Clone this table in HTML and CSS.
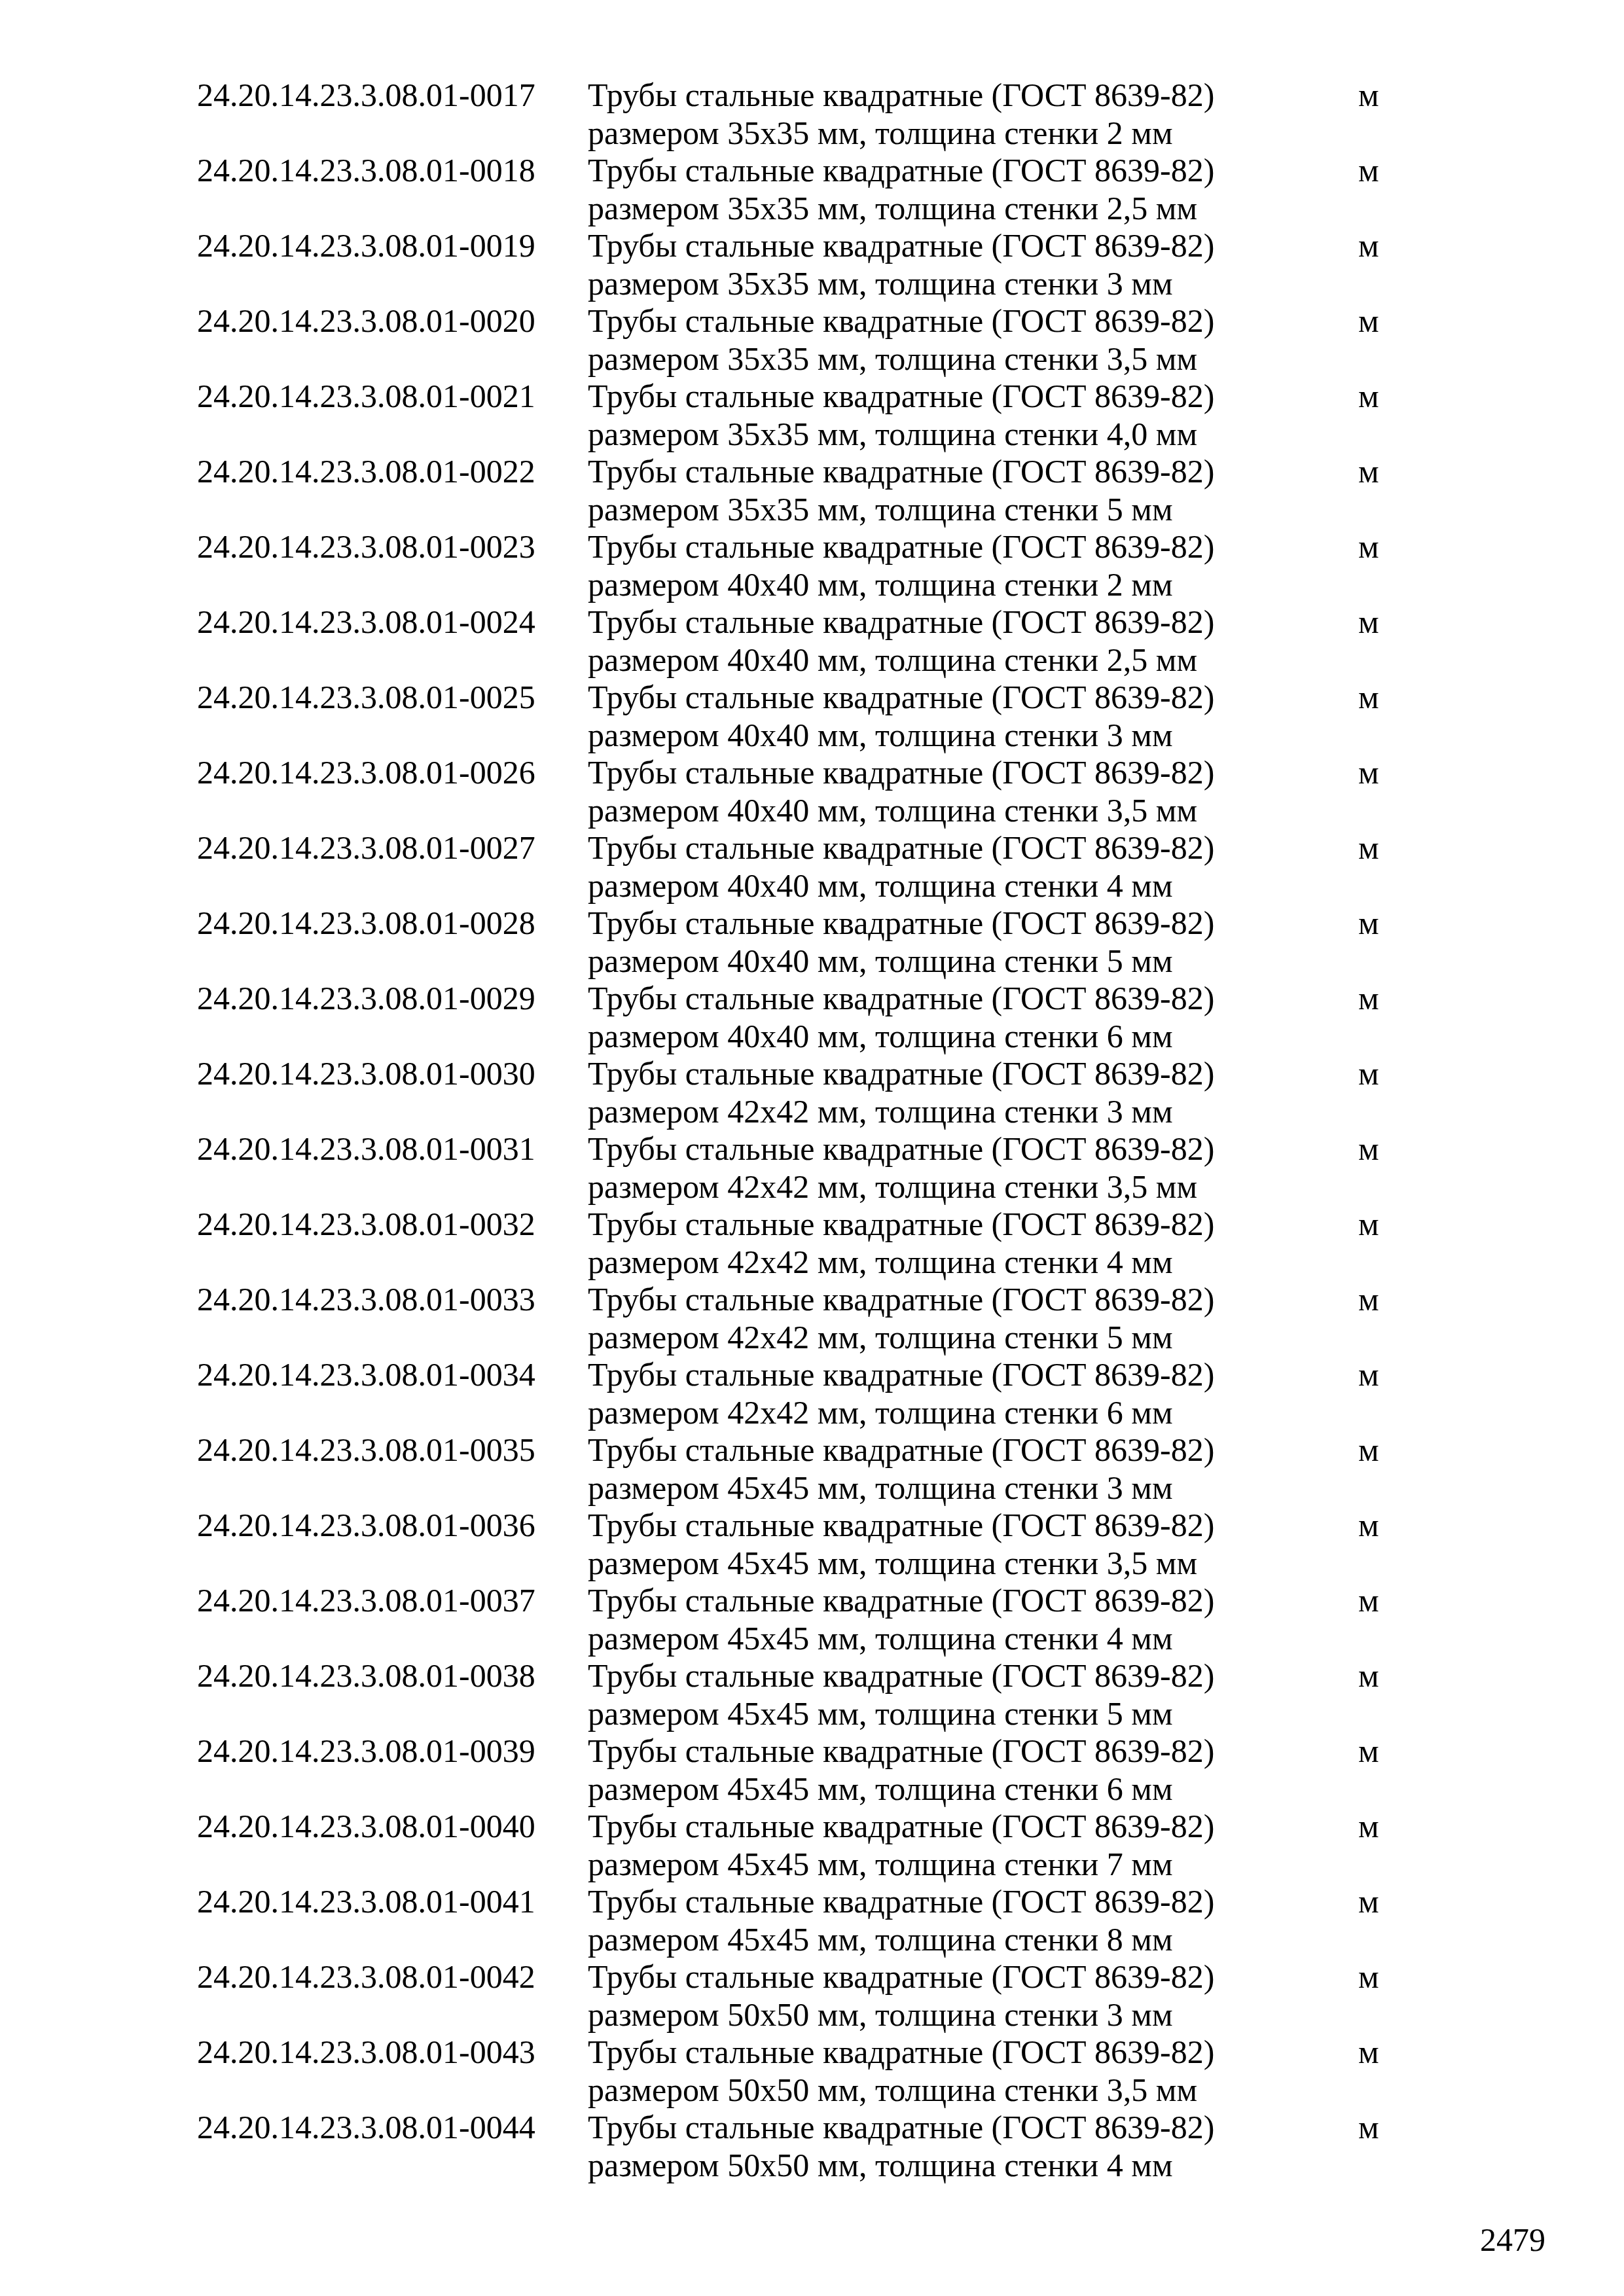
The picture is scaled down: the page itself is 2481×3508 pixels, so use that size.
FILE: index.html
```html
<!DOCTYPE html>
<html lang="ru">
<head>
    <meta charset="UTF-8">
    <title>2479</title>
    <link rel="stylesheet" href="styles.css">
</head>
<body>

<div class="page">
    <div class="list">
        <div class="row"><div class="code">24.20.14.23.3.08.01-0017</div><div class="name"><span>Трубы стальные квадратные (ГОСТ 8639-82)</span><span>размером 35х35 мм, толщина стенки 2 мм</span></div><div class="unit">м</div></div>
        <div class="row"><div class="code">24.20.14.23.3.08.01-0018</div><div class="name"><span>Трубы стальные квадратные (ГОСТ 8639-82)</span><span>размером 35х35 мм, толщина стенки 2,5 мм</span></div><div class="unit">м</div></div>
        <div class="row"><div class="code">24.20.14.23.3.08.01-0019</div><div class="name"><span>Трубы стальные квадратные (ГОСТ 8639-82)</span><span>размером 35х35 мм, толщина стенки 3 мм</span></div><div class="unit">м</div></div>
        <div class="row"><div class="code">24.20.14.23.3.08.01-0020</div><div class="name"><span>Трубы стальные квадратные (ГОСТ 8639-82)</span><span>размером 35х35 мм, толщина стенки 3,5 мм</span></div><div class="unit">м</div></div>
        <div class="row"><div class="code">24.20.14.23.3.08.01-0021</div><div class="name"><span>Трубы стальные квадратные (ГОСТ 8639-82)</span><span>размером 35х35 мм, толщина стенки 4,0 мм</span></div><div class="unit">м</div></div>
        <div class="row"><div class="code">24.20.14.23.3.08.01-0022</div><div class="name"><span>Трубы стальные квадратные (ГОСТ 8639-82)</span><span>размером 35х35 мм, толщина стенки 5 мм</span></div><div class="unit">м</div></div>
        <div class="row"><div class="code">24.20.14.23.3.08.01-0023</div><div class="name"><span>Трубы стальные квадратные (ГОСТ 8639-82)</span><span>размером 40х40 мм, толщина стенки 2 мм</span></div><div class="unit">м</div></div>
        <div class="row"><div class="code">24.20.14.23.3.08.01-0024</div><div class="name"><span>Трубы стальные квадратные (ГОСТ 8639-82)</span><span>размером 40х40 мм, толщина стенки 2,5 мм</span></div><div class="unit">м</div></div>
        <div class="row"><div class="code">24.20.14.23.3.08.01-0025</div><div class="name"><span>Трубы стальные квадратные (ГОСТ 8639-82)</span><span>размером 40х40 мм, толщина стенки 3 мм</span></div><div class="unit">м</div></div>
        <div class="row"><div class="code">24.20.14.23.3.08.01-0026</div><div class="name"><span>Трубы стальные квадратные (ГОСТ 8639-82)</span><span>размером 40х40 мм, толщина стенки 3,5 мм</span></div><div class="unit">м</div></div>
        <div class="row"><div class="code">24.20.14.23.3.08.01-0027</div><div class="name"><span>Трубы стальные квадратные (ГОСТ 8639-82)</span><span>размером 40х40 мм, толщина стенки 4 мм</span></div><div class="unit">м</div></div>
        <div class="row"><div class="code">24.20.14.23.3.08.01-0028</div><div class="name"><span>Трубы стальные квадратные (ГОСТ 8639-82)</span><span>размером 40х40 мм, толщина стенки 5 мм</span></div><div class="unit">м</div></div>
        <div class="row"><div class="code">24.20.14.23.3.08.01-0029</div><div class="name"><span>Трубы стальные квадратные (ГОСТ 8639-82)</span><span>размером 40х40 мм, толщина стенки 6 мм</span></div><div class="unit">м</div></div>
        <div class="row"><div class="code">24.20.14.23.3.08.01-0030</div><div class="name"><span>Трубы стальные квадратные (ГОСТ 8639-82)</span><span>размером 42х42 мм, толщина стенки 3 мм</span></div><div class="unit">м</div></div>
        <div class="row"><div class="code">24.20.14.23.3.08.01-0031</div><div class="name"><span>Трубы стальные квадратные (ГОСТ 8639-82)</span><span>размером 42х42 мм, толщина стенки 3,5 мм</span></div><div class="unit">м</div></div>
        <div class="row"><div class="code">24.20.14.23.3.08.01-0032</div><div class="name"><span>Трубы стальные квадратные (ГОСТ 8639-82)</span><span>размером 42х42 мм, толщина стенки 4 мм</span></div><div class="unit">м</div></div>
        <div class="row"><div class="code">24.20.14.23.3.08.01-0033</div><div class="name"><span>Трубы стальные квадратные (ГОСТ 8639-82)</span><span>размером 42х42 мм, толщина стенки 5 мм</span></div><div class="unit">м</div></div>
        <div class="row"><div class="code">24.20.14.23.3.08.01-0034</div><div class="name"><span>Трубы стальные квадратные (ГОСТ 8639-82)</span><span>размером 42х42 мм, толщина стенки 6 мм</span></div><div class="unit">м</div></div>
        <div class="row"><div class="code">24.20.14.23.3.08.01-0035</div><div class="name"><span>Трубы стальные квадратные (ГОСТ 8639-82)</span><span>размером 45х45 мм, толщина стенки 3 мм</span></div><div class="unit">м</div></div>
        <div class="row"><div class="code">24.20.14.23.3.08.01-0036</div><div class="name"><span>Трубы стальные квадратные (ГОСТ 8639-82)</span><span>размером 45х45 мм, толщина стенки 3,5 мм</span></div><div class="unit">м</div></div>
        <div class="row"><div class="code">24.20.14.23.3.08.01-0037</div><div class="name"><span>Трубы стальные квадратные (ГОСТ 8639-82)</span><span>размером 45х45 мм, толщина стенки 4 мм</span></div><div class="unit">м</div></div>
        <div class="row"><div class="code">24.20.14.23.3.08.01-0038</div><div class="name"><span>Трубы стальные квадратные (ГОСТ 8639-82)</span><span>размером 45х45 мм, толщина стенки 5 мм</span></div><div class="unit">м</div></div>
        <div class="row"><div class="code">24.20.14.23.3.08.01-0039</div><div class="name"><span>Трубы стальные квадратные (ГОСТ 8639-82)</span><span>размером 45х45 мм, толщина стенки 6 мм</span></div><div class="unit">м</div></div>
        <div class="row"><div class="code">24.20.14.23.3.08.01-0040</div><div class="name"><span>Трубы стальные квадратные (ГОСТ 8639-82)</span><span>размером 45х45 мм, толщина стенки 7 мм</span></div><div class="unit">м</div></div>
        <div class="row"><div class="code">24.20.14.23.3.08.01-0041</div><div class="name"><span>Трубы стальные квадратные (ГОСТ 8639-82)</span><span>размером 45х45 мм, толщина стенки 8 мм</span></div><div class="unit">м</div></div>
        <div class="row"><div class="code">24.20.14.23.3.08.01-0042</div><div class="name"><span>Трубы стальные квадратные (ГОСТ 8639-82)</span><span>размером 50х50 мм, толщина стенки 3 мм</span></div><div class="unit">м</div></div>
        <div class="row"><div class="code">24.20.14.23.3.08.01-0043</div><div class="name"><span>Трубы стальные квадратные (ГОСТ 8639-82)</span><span>размером 50х50 мм, толщина стенки 3,5 мм</span></div><div class="unit">м</div></div>
        <div class="row"><div class="code">24.20.14.23.3.08.01-0044</div><div class="name"><span>Трубы стальные квадратные (ГОСТ 8639-82)</span><span>размером 50х50 мм, толщина стенки 4 мм</span></div><div class="unit">м</div></div>
    </div>

    <footer class="page-number">2479</footer>
</div>

</body>
</html>
```

FILE: styles.css
```css
body {
    margin: 0;
    padding: 0;
    background-color: #ffffff;
    color: #000;
    font-family: "Liberation Serif", "Times New Roman", serif;
    font-size: 50px;
    line-height: 57.5px;
}
.page {
    width: 2481px;
    padding: 117px 0 0 301px;
    box-sizing: border-box;
}
.list {
    display: flex;
    flex-direction: column;
}
.row {
    display: grid;
    grid-template-columns: 597px 1177px auto;
    height: 115px;
}
.code, .unit {
    white-space: nowrap;
}
.name span {
    display: block;
    white-space: nowrap;
}
.page-number {
    margin-top: 57px;
    padding-right: 120px;
    text-align: right;
}
```
